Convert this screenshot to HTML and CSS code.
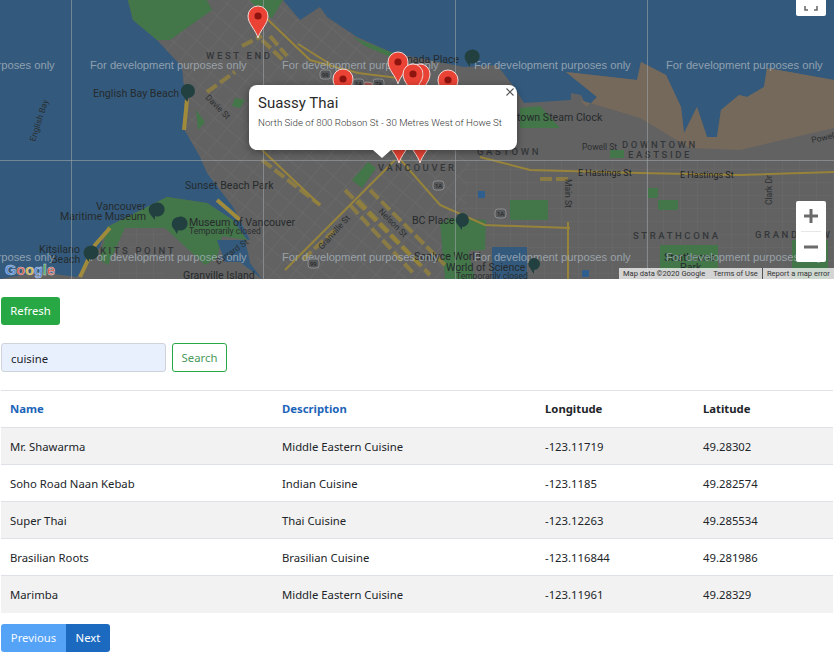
FILE: index.html
```html
<!DOCTYPE html>
<html lang="en">
<head>
<meta charset="utf-8">
<title>Food Trucks</title>
<link rel="stylesheet" href="styles.css">
</head>
<body>
<section class="map">
  <svg class="map-art" width="834" height="279" viewBox="0 0 834 279">
    <defs>
      <pattern id="streets-a" width="16" height="16" patternUnits="userSpaceOnUse" patternTransform="rotate(40)">
        <path d="M0 0H16M0 0V16" stroke="#6d6d6d" stroke-width="1" fill="none"/>
      </pattern>
      <pattern id="streets-b" width="17" height="13" patternUnits="userSpaceOnUse">
        <path d="M0 0H17M0 0V13" stroke="#6a6a6a" stroke-width="1" fill="none"/>
      </pattern>
      <g id="pin">
        <path d="M0 32C-2 24-10 18-10 10A10 10 0 0 1 10 10C10 18 2 24 0 32Z" fill="#ea4335" stroke="#f3d9d5" stroke-width="1"/>
        <circle cx="0" cy="10" r="3.600" fill="#8f1410"/>
      </g>
    </defs>
    <rect class="water" width="834" height="279"/>
    <path class="land" d="M128 0L133 20L157 40L182 67L185 97L183 127L200 157L207 173L233 207L250 240L222 236L217 258L240 250L262 279H834V80L767 68L764 87L747 97L739 95L721 110L717 137L707 137L697 107L684 133L681 107L666 75L641 62L637 80L566 72L597 97L587 107L581 95L571 93L571 100L524 103L514 87L497 65L464 67L393 53L357 37L327 17L320 7L300 20L283 0Z"/>
    <path class="port" d="M566 72L637 80L641 62L666 75L681 107L684 133L697 107L707 137L717 137L721 110L739 95L747 97L764 87L767 68L834 80V128L740 150L690 148L640 118L580 100L587 107L597 97Z"/>
    <path class="land" d="M0 279L40 272L77 277L100 247L107 227L167 197L207 203L233 220L247 240L222 236L217 258L240 262L262 279Z"/>
    <path class="streets1" d="M128 0L133 20L157 40L182 67L185 97L183 127L200 157L207 173L233 207L250 240L262 279H460L470 160L440 130L400 60L357 37L327 17L300 20L283 0Z"/>
    <path class="streets2" d="M460 160H834V279H460Z"/>
    <path class="streets2" d="M110 228H165V279H110Z"/>
    <g class="park">
      <path d="M128 0H207L212 10L170 40L157 40L133 20Z"/>
      <path d="M250 0H283L272 18L262 14Z"/>
      <path d="M107 227L167 197L207 203L233 220L247 240L222 236L217 258L205 265L178 240L165 228H125L108 265L100 260Z"/>
      <path d="M353 37L393 53V58L365 46Z"/>
      <path d="M196 110L205 122L198 130Z"/>
      <path d="M235 98L245 100L240 108L232 106Z"/>
      <path d="M352 180L368 162L376 168L362 188Z"/>
      <path d="M520 108L540 106L560 128H520Z"/>
      <path d="M610 150H624V158H610Z"/>
      <path d="M510 200H548V220H510Z"/>
      <path d="M447 218L486 220L485 250L442 252Z"/>
      <path d="M648 188H658V198H648Z"/>
      <path d="M658 200H678V210H658Z"/>
      <path d="M660 245H718V270H660Z"/>
      <path d="M792 240H828V279H792Z"/>
      <path d="M440 222L462 222L475 279H445Z"/>
    </g>
    <path class="inlet" d="M492 247H527V279H492Z"/>
    <path class="inlet" d="M217 240L245 240L250 262L225 262Z"/>
    <g class="roads">
      <path d="M262 14L310 60L358 73L398 78"/>
      <path d="M298 44L330 64"/>
      <path d="M262 150L320 205"/>
      <path d="M285 270L350 205L395 160"/>
      <path d="M392 150L440 205L485 225L570 228"/>
      <path d="M480 157L530 170L640 173L740 175L834 172"/>
      <path d="M568 222V279"/>
      <path class="road-solid" d="M187 100L184 130"/>
      <path class="road-solid" d="M110 228L95 245L80 277"/>
      <path class="road-solid" d="M217 200L240 220"/>
      <path class="road-wide" d="M207 92L235 72"/>
      <path class="road-wide" d="M242 46L262 36"/>
      <path class="road-wide" d="M262 40L285 62"/>
      <path class="road-wide" d="M270 36L287 56"/>
      <path class="road-wide" d="M262 160L320 205"/>
      <path class="road-wide" d="M345 190L420 265"/>
      <path class="road-wide" d="M370 190L445 265"/>
      <path class="road-wide" d="M350 205L415 275"/>
      <path class="road-wide" d="M358 200L430 275"/>
      <path class="road-wide" d="M335 230L300 262"/>
      <path class="road-wide" d="M540 179H570"/>
    </g>
    <g class="labels">
      <text class="area" x="206" y="59">WEST END</text>
      <text x="93" y="97">English Bay Beach</text>
      <text x="185" y="189">Sunset Beach Park</text>
      <text x="96" y="210">Vancouver</text>
      <text x="60" y="220">Maritime Museum</text>
      <text x="189" y="226">Museum of Vancouver</text>
      <text class="small" x="189" y="234">Temporarily closed</text>
      <text x="39" y="253">Kitsilano</text>
      <text x="51" y="263">Beach</text>
      <text class="area" x="100" y="254">KITS POINT</text>
      <text x="183" y="279">Granville Island</text>
      <text class="small" transform="rotate(-72 35 142)" x="35" y="142">English Bay</text>
      <text class="small" transform="rotate(45 205 98)" x="205" y="98">Davie St</text>
      <text class="small" transform="rotate(-48 322 250)" x="322" y="250">Granville St</text>
      <text class="small" transform="rotate(45 378 212)" x="378" y="212">Nelson St</text>
      <text class="small" transform="rotate(-35 218 265)" x="218" y="265">Burrard St</text>
      <text x="412" y="224">BC Place</text>
      <text x="407" y="63">nada Place</text>
      <text x="517" y="121">town Steam Clock</text>
      <text class="small" x="582" y="150">Powell St</text>
      <text class="area" x="622" y="148">DOWNTOWN</text>
      <text class="area" x="628" y="158">EASTSIDE</text>
      <text class="area" x="477" y="155">GASTOWN</text>
      <text class="area" x="378" y="171">VANCOUVER</text>
      <text class="street" x="578" y="176">E Hastings St</text>
      <text class="street" x="680" y="178">E Hastings St</text>
      <text class="small" transform="rotate(90 565 179)" x="565" y="179">Main St</text>
      <text class="small" transform="rotate(-90 772 205)" x="772" y="205">Clark Dr</text>
      <text class="small" transform="rotate(-12 812 143)" x="812" y="143">Powell St</text>
      <text class="area" x="633" y="239">STRATHCONA</text>
      <text class="area" x="755" y="238">GRANDVIEW</text>
      <text x="414" y="260">Sonlyce World</text>
      <text x="446" y="271">World of Science</text>
      <text class="small" x="456" y="279">Temporarily closed</text>
      <text x="664" y="261">Strathcona</text>
      <text x="680" y="271">Park</text>
    </g>
    <g class="tile-lines">
      <path d="M71.500 0V279M263.500 0V279M455.500 0V279M647.500 0V279M0 160.500H834"/>
    </g>
    <g class="watermark">
      <text x="-102" y="69">For development purposes only</text>
      <text x="90" y="69">For development purposes only</text>
      <text x="282" y="69">For development purposes only</text>
      <text x="474" y="69">For development purposes only</text>
      <text x="666" y="69">For development purposes only</text>
      <text x="-102" y="261">For development purposes only</text>
      <text x="90" y="261">For development purposes only</text>
      <text x="282" y="261">For development purposes only</text>
      <text x="474" y="261">For development purposes only</text>
      <text x="666" y="261">For development purposes only</text>
    </g>
    <use href="#pin" x="258" y="6"/>
    <use href="#pin" x="343" y="69"/>
    <g class="pin-faded"><use href="#pin" x="367" y="82"/></g>
    <use href="#pin" x="398" y="52"/>
    <use href="#pin" x="420" y="64"/>
    <use href="#pin" x="413" y="64"/>
    <use href="#pin" x="448" y="70"/>
    <use href="#pin" x="399" y="131"/>
    <use href="#pin" x="420" y="131"/>
    <g class="poi">
      <path d="M188 84A7 7 0 1 1 188 98L187.500 102L183 96A7 7 0 0 1 188 84Z"/>
      <path d="M155 203A7 7 0 1 1 155 216L155 220L150 214A7 7 0 0 1 155 203Z"/>
      <path d="M178 217A7 7 0 1 1 178 230L177 234L174 229A7 7 0 0 1 178 217Z"/>
      <path d="M89 246A7 7 0 1 1 89 259L89 262L85 257A7 7 0 0 1 89 246Z"/>
      <path d="M470 50A7 7 0 1 1 470 63L470 67L466 61A7 7 0 0 1 470 50Z"/>
      <path d="M462 213A7 7 0 1 1 462 227L462 230L458 225A7 7 0 0 1 462 213Z"/>
      <path d="M534 258A6 6 0 1 1 534 270L534 274L530 268A6 6 0 0 1 534 258Z"/>
    </g>
    <g class="metro">
      <rect x="478" y="191" width="7" height="7" rx="1"/>
      <rect x="582" y="270" width="7" height="7" rx="1"/>
    </g>
    <g class="shield">
      <rect x="320" y="70" width="11" height="9" rx="3"/><text x="322" y="77">99</text>
      <rect x="353" y="79" width="11" height="9" rx="3"/><text x="355" y="86">1A</text>
      <rect x="373" y="79" width="11" height="9" rx="3"/><text x="375" y="86">7A</text>
      <rect x="433" y="181" width="11" height="9" rx="3"/><text x="435" y="188">1A</text>
      <rect x="495" y="209" width="11" height="9" rx="3"/><text x="497" y="216">1A</text>
      <rect x="308" y="259" width="11" height="9" rx="3"/><text x="310" y="266">99</text>
    </g>
    <g class="google">
      <text x="5" y="275"><tspan class="g-blue">G</tspan><tspan class="g-red">o</tspan><tspan class="g-yellow">o</tspan><tspan class="g-blue">g</tspan><tspan class="g-green">l</tspan><tspan class="g-red">e</tspan></text>
    </g>
  </svg>

  <div class="popup">
    <button class="popup-close" type="button" aria-label="Close">
      <svg width="8" height="8" viewBox="0 0 8 8"><path d="M0.500 0.500L7.500 7.500M7.500 0.500L0.500 7.500"/></svg>
    </button>
    <h2 class="popup-title">Suassy Thai</h2>
    <p class="popup-text">North Side of 800 Robson St - 30 Metres West of Howe St</p>
    <span class="popup-tip"></span>
  </div>

  <button class="map-btn fullscreen" type="button" aria-label="Toggle fullscreen view">
    <svg width="14" height="5" viewBox="0 0 14 5"><path d="M1 0V4H4M13 0V4H10"/></svg>
  </button>

  <div class="zoom">
    <button class="zoom-btn" type="button" aria-label="Zoom in">
      <svg width="14" height="14" viewBox="0 0 14 14"><path d="M0 7H14M7 0V14"/></svg>
    </button>
    <span class="zoom-sep"></span>
    <button class="zoom-btn" type="button" aria-label="Zoom out">
      <svg width="14" height="14" viewBox="0 0 14 14"><path d="M0 7H14"/></svg>
    </button>
  </div>

  <div class="attribution">
    <span class="attr-item attr-data">Map data ©2020 Google</span>
    <span class="attr-item">Terms of Use</span>
    <span class="attr-item attr-report">Report a map error</span>
  </div>
</section>

<main class="content">
  <button class="btn btn-refresh" type="button">Refresh</button>

  <form class="search">
    <input class="search-input" type="text" value="cuisine" aria-label="Search">
    <button class="btn btn-search" type="button">Search</button>
  </form>

  <table class="trucks">
    <thead>
      <tr>
        <th class="col-name"><a href="#">Name</a></th>
        <th class="col-desc"><a href="#">Description</a></th>
        <th class="col-lon">Longitude</th>
        <th>Latitude</th>
      </tr>
    </thead>
    <tbody>
      <tr><td>Mr. Shawarma</td><td>Middle Eastern Cuisine</td><td>-123.11719</td><td>49.28302</td></tr>
      <tr><td>Soho Road Naan Kebab</td><td>Indian Cuisine</td><td>-123.1185</td><td>49.282574</td></tr>
      <tr><td>Super Thai</td><td>Thai Cuisine</td><td>-123.12263</td><td>49.285534</td></tr>
      <tr><td>Brasilian Roots</td><td>Brasilian Cuisine</td><td>-123.116844</td><td>49.281986</td></tr>
      <tr><td>Marimba</td><td>Middle Eastern Cuisine</td><td>-123.11961</td><td>49.28329</td></tr>
    </tbody>
  </table>

  <nav class="pager">
    <button class="btn btn-prev" type="button">Previous</button>
    <button class="btn btn-next" type="button">Next</button>
  </nav>
</main>
</body>
</html>
```
FILE: styles.css
```css
* { box-sizing: border-box; }

html, body { margin: 0; padding: 0; }

body {
  width: 834px;
  height: 652px;
  overflow: hidden;
  background: #fff;
  color: #212529;
  font-family: "Noto Sans", "Open Sans", sans-serif;
  font-size: 11.300px;
}

/* Map */
.map { position: relative; height: 279px; overflow: hidden; background: #335a7d; }
.map-art { position: absolute; left: 0; top: 0; display: block; }

.water { fill: #335a7d; }
.land { fill: #626262; }
.port { fill: #75695c; }
.inlet { fill: #335a7d; }
.streets1 { fill: url(#streets-a); }
.streets2 { fill: url(#streets-b); }
.park path { fill: #437649; }
.roads path { fill: none; stroke: #97843a; stroke-width: 2; }
.roads .road-solid { stroke: #a08a3c; stroke-width: 4; }
.roads .road-wide { stroke-width: 4; stroke-dasharray: 12 4; opacity: .75; }
.labels text { font: 10.600px Roboto, sans-serif; fill: #262a2c; }
.labels .area { font-size: 9.500px; font-weight: 500; letter-spacing: 2.600px; fill: #34373a; }
.labels .small { font-size: 8.500px; fill: #2b2e30; }
.labels .street { font-size: 9px; fill: #1f2325; }
.tile-lines path { fill: none; stroke: #9ea3a7; stroke-width: 1; opacity: .6; }
.watermark text { font: 11.200px "Liberation Sans", Arial, sans-serif; fill: #a9b4bd; opacity: .78; }
.pin-faded { opacity: .45; }
.poi path { fill: #21403f; }
.metro rect { fill: #2f5f8f; }
.shield rect { fill: #55585a; stroke: #8d8d8d; stroke-width: 1; }
.shield text { font: 6px Roboto, sans-serif; fill: #222; }
.google text { font: 700 14.500px "Liberation Sans", Arial, sans-serif; stroke: #cfd3d6; stroke-width: .5px; }
.g-blue { fill: #4a86e0; }
.g-red { fill: #d9503f; }
.g-yellow { fill: #d9b23a; }
.g-green { fill: #4aa35a; }

/* Info popup */
.popup {
  position: absolute;
  left: 249px;
  top: 85px;
  width: 268px;
  height: 65px;
  padding: 9px 9px 0;
  background: #fff;
  border-radius: 8px;
  box-shadow: 0 2px 7px 1px rgba(0, 0, 0, .3);
  font-family: Roboto, sans-serif;
}
.popup-title { margin: 0; font-size: 15px; line-height: 18px; font-weight: 400; color: #2b2b2b; }
.popup-text { margin: 5px 0 0; font-size: 9.700px; line-height: 12px; font-weight: 300; color: #333; white-space: nowrap; }
.popup-close { position: absolute; right: 3px; top: 2px; width: 9px; height: 9px; padding: 0; border: 0; background: none; line-height: 0; }
.popup-close path { fill: none; stroke: #555; stroke-width: 1.100; }
.popup-tip {
  position: absolute;
  left: 124px;
  top: 65px;
  border-left: 9px solid transparent;
  border-right: 9px solid transparent;
  border-top: 8px solid #fff;
}

/* Map controls */
.map-btn { position: absolute; padding: 0; border: 0; background: #fff; }
.fullscreen { left: 796px; top: -14px; width: 30px; height: 30px; padding-top: 14px; border-radius: 2px; line-height: 0; }
.fullscreen path { fill: none; stroke: #666; stroke-width: 1.500; }

.zoom {
  position: absolute;
  left: 796px;
  top: 201px;
  width: 30px;
  height: 61px;
  display: flex;
  flex-direction: column;
  background: #fff;
  border-radius: 2px;
}
.zoom-btn { flex: 1; display: flex; align-items: center; justify-content: center; padding: 0; border: 0; background: none; }
.zoom-btn path { fill: none; stroke: #6b6b6b; stroke-width: 3; }
.zoom-sep { height: 1px; margin: 0 5px; background: #e6e6e6; }

.attribution {
  position: absolute;
  right: 0;
  bottom: 0;
  width: 215px;
  height: 11px;
  display: flex;
  align-items: center;
  font: 7.550px/11px Roboto, sans-serif;
  color: #333;
  background: rgba(245, 245, 245, .78);
  white-space: nowrap;
}
.attr-item { padding: 0 4px 0 8px; }
.attr-data { padding: 0 0 0 4px; }
.attr-report { padding-left: 4px; border-left: 1px solid #555; }

/* Content */
.content { padding: 18px 1px 0; }

.btn {
  display: inline-block;
  height: 28px;
  padding: 0 10px;
  border: 1px solid transparent;
  border-radius: 3px;
  font: inherit;
  line-height: 26px;
  color: #fff;
  background: none;
  white-space: nowrap;
}
.btn-refresh { display: block; width: 59px; padding: 0; background: #28a745; }

.search { display: flex; gap: 6px; margin-top: 18px; height: 29px; }
.search-input {
  width: 165px;
  height: 29px;
  padding: 1px 9px 0;
  border: 1px solid #ced4da;
  border-radius: 3px;
  background: #e8f0fe;
  color: #212529;
  font: inherit;
}
.btn-search { width: 55px; height: 29px; padding: 0; border-color: #28a745; background: #fff; color: #4a9a5c; }

.trucks {
  width: 832px;
  margin-top: 18px;
  border-collapse: collapse;
  table-layout: fixed;
}
.trucks th, .trucks td {
  height: 37px;
  padding: 0 0 0 10px;
  text-align: left;
  vertical-align: middle;
  border-top: 1px solid #dee2e6;
}
.trucks th:first-child, .trucks td:first-child { padding-left: 9px; }
.trucks th { padding-bottom: 2px; font-weight: 700; border-bottom: 1px solid #dee2e6; }
.trucks a { color: #1b64b8; text-decoration: none; }
.trucks tbody tr:nth-child(odd) { background: #f2f2f2; }
.col-name { width: 271px; }
.col-desc { width: 263px; }
.col-lon { width: 158px; }

.pager { display: flex; margin-top: 11px; }
.btn-prev { width: 65px; padding: 0; background: #54a3f7; border-radius: 3px 0 0 3px; color: #f4f9ff; }
.btn-next { width: 44px; padding: 0; background: #1b6ac0; border-radius: 0 3px 3px 0; }
```
